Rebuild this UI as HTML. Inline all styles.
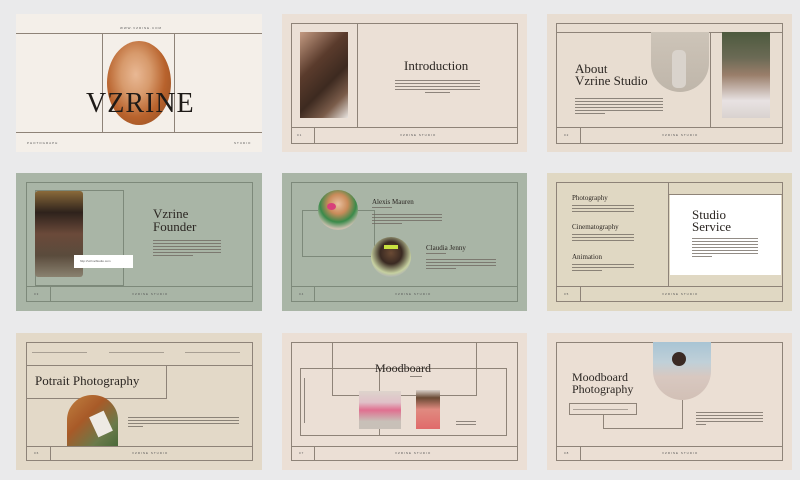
<!DOCTYPE html>
<html><head><meta charset="utf-8"><style>
*{margin:0;padding:0;box-sizing:border-box}
body{width:800px;height:480px;background:#eaeaeb;position:relative;overflow:hidden;font-family:"Liberation Serif",serif;color:#2b2622}
div{position:absolute}
.s{}
.b{border:1px solid #8e8378}
.h{height:1px;background:#8e8378}
.v{width:1px;background:#8e8378}
.t{white-space:nowrap;color:#2b2622}
.sm{font-family:"Liberation Sans",sans-serif;font-size:3px;letter-spacing:1px;color:#555}
.tx{height:1px;background:#6d655e;opacity:.75}
</style></head><body>

<!-- Slide 1 -->
<div style="left:16px;top:14px;width:246px;height:138px;background:#f4efe9"></div>
<div class="h" style="left:16px;top:33px;width:246px"></div>
<div class="h" style="left:16px;top:132px;width:246px"></div>
<div class="v" style="left:102px;top:33px;height:99px"></div>
<div class="v" style="left:174px;top:33px;height:99px"></div>
<div style="left:107px;top:41px;width:64px;height:84px;border-radius:50%;background:radial-gradient(ellipse at 45% 40%,#e9b894 0%,#d79a6c 30%,#b8622c 60%,#8a4a22 100%)"></div>
<div class="t" style="left:86px;top:88px;font-size:28px;letter-spacing:1px;color:#1e1a17">VZRINE</div>
<div class="sm t" style="left:120px;top:26px">WWW.VZRINE.COM</div>
<div class="sm t" style="left:27px;top:141px">PHOTOGRAPH</div>
<div class="sm t" style="left:234px;top:141px">STUDIO</div>

<!-- Slide 2 -->
<div style="left:282px;top:14px;width:245px;height:138px;background:#ebe0d6"></div>
<div class="b" style="left:291px;top:23px;width:227px;height:121px"></div>
<div class="h" style="left:291px;top:127px;width:227px"></div>
<div class="v" style="left:314px;top:127px;height:17px"></div>
<div class="v" style="left:357px;top:23px;height:104px"></div>
<div style="left:300px;top:32px;width:48px;height:86px;background:linear-gradient(135deg,#c39a82 0%,#5a3b2c 35%,#3d2a20 60%,#7a5c4a 80%,#e8e4e0 100%)"></div>
<div class="sm t" style="left:297px;top:133px">01</div>
<div class="t" style="left:404px;top:58px;font-size:13px">Introduction</div>
<div class="tx" style="left:395px;top:80px;width:85px"></div>
<div class="tx" style="left:395px;top:83px;width:85px"></div>
<div class="tx" style="left:395px;top:86px;width:85px"></div>
<div class="tx" style="left:395px;top:89px;width:85px"></div>
<div class="tx" style="left:425px;top:92px;width:25px"></div>
<div class="sm t" style="left:400px;top:133px">VZRINE STUDIO</div>

<!-- Slide 3 -->
<div style="left:547px;top:14px;width:245px;height:138px;background:#e8ddd1"></div>
<div class="b" style="left:556px;top:23px;width:227px;height:121px"></div>
<div class="h" style="left:556px;top:32px;width:227px"></div>
<div class="h" style="left:556px;top:127px;width:227px"></div>
<div class="v" style="left:580px;top:127px;height:17px"></div>
<div class="v" style="left:710px;top:32px;height:95px"></div>
<div style="left:651px;top:32px;width:58px;height:60px;border-radius:0 0 29px 29px;background:linear-gradient(180deg,#cdc4b8,#bfb6aa)"></div>
<div style="left:672px;top:50px;width:14px;height:38px;background:#d9d3cc;border-radius:5px"></div>
<div style="left:722px;top:32px;width:48px;height:86px;background:linear-gradient(180deg,#4d5a3e 0%,#6b6a55 30%,#9a7e6a 50%,#e8e2e2 80%,#d9d2cf 100%)"></div>
<div class="sm t" style="left:564px;top:133px">02</div>
<div class="sm t" style="left:662px;top:133px">VZRINE STUDIO</div>
<div class="t" style="left:575px;top:63px;font-size:13px;line-height:12px">About<br>Vzrine Studio</div>
<div class="tx" style="left:575px;top:98px;width:88px"></div>
<div class="tx" style="left:575px;top:101px;width:88px"></div>
<div class="tx" style="left:575px;top:104px;width:88px"></div>
<div class="tx" style="left:575px;top:107px;width:88px"></div>
<div class="tx" style="left:575px;top:110px;width:88px"></div>
<div class="tx" style="left:575px;top:113px;width:30px"></div>

<!-- Slide 4 -->
<div style="left:16px;top:173px;width:246px;height:138px;background:#a9b5a6"></div>
<div class="b" style="left:26px;top:182px;width:227px;height:120px;border-color:#7d897a"></div>
<div class="h" style="left:26px;top:286px;width:227px;background:#7d897a"></div>
<div class="v" style="left:50px;top:286px;height:16px;background:#7d897a"></div>
<div class="b" style="left:35px;top:190px;width:89px;height:96px;border-color:#7d897a"></div>
<div style="left:35px;top:191px;width:48px;height:86px;border-radius:3px;background:linear-gradient(180deg,#8a6a3a 0%,#2e221c 25%,#6b4a3a 50%,#5a4b3c 75%,#8a8270 100%)"></div>
<div style="left:74px;top:255px;width:59px;height:13px;background:#fff"></div>
<div class="sm t" style="left:80px;top:259px;letter-spacing:0">http://vzrineStudio.com</div>
<div class="t" style="left:153px;top:207px;font-size:13px;line-height:13px">Vzrine<br>Founder</div>
<div class="tx" style="left:153px;top:240px;width:68px"></div>
<div class="tx" style="left:153px;top:243px;width:68px"></div>
<div class="tx" style="left:153px;top:246px;width:68px"></div>
<div class="tx" style="left:153px;top:249px;width:68px"></div>
<div class="tx" style="left:153px;top:252px;width:68px"></div>
<div class="tx" style="left:153px;top:255px;width:40px"></div>
<div class="sm t" style="left:34px;top:292px">03</div>
<div class="sm t" style="left:132px;top:292px">VZRINE STUDIO</div>

<!-- Slide 5 -->
<div style="left:282px;top:173px;width:245px;height:138px;background:#a9b5a6"></div>
<div class="b" style="left:291px;top:182px;width:227px;height:120px;border-color:#7d897a"></div>
<div class="h" style="left:291px;top:286px;width:227px;background:#7d897a"></div>
<div class="v" style="left:314px;top:286px;height:16px;background:#7d897a"></div>
<div class="b" style="left:302px;top:210px;width:73px;height:47px;border-color:#7d897a"></div>
<div style="left:318px;top:190px;width:40px;height:40px;border-radius:50%;background:radial-gradient(circle at 50% 35%,#e8c0a0 0%,#c98b5a 30%,#3a8a4a 55%,#c9bfae 75%)"></div>
<div style="left:327px;top:203px;width:9px;height:7px;border-radius:50%;background:#d8407a"></div>
<div style="left:371px;top:237px;width:40px;height:40px;border-radius:50%;background:radial-gradient(circle at 50% 40%,#6a4a34 0%,#3a2a22 35%,#c6d0a0 65%,#a9acb5 80%)"></div>
<div style="left:384px;top:245px;width:14px;height:4px;background:#c8e040"></div>
<div class="t" style="left:372px;top:198px;font-size:7px">Alexis Mauren</div>
<div class="tx" style="left:372px;top:207px;width:20px"></div>
<div class="tx" style="left:372px;top:214px;width:70px"></div>
<div class="tx" style="left:372px;top:217px;width:70px"></div>
<div class="tx" style="left:372px;top:220px;width:70px"></div>
<div class="tx" style="left:372px;top:223px;width:30px"></div>
<div class="t" style="left:426px;top:244px;font-size:7px">Claudia Jenny</div>
<div class="tx" style="left:426px;top:253px;width:20px"></div>
<div class="tx" style="left:426px;top:259px;width:70px"></div>
<div class="tx" style="left:426px;top:262px;width:70px"></div>
<div class="tx" style="left:426px;top:265px;width:70px"></div>
<div class="tx" style="left:426px;top:268px;width:30px"></div>
<div class="sm t" style="left:299px;top:292px">04</div>
<div class="sm t" style="left:395px;top:292px">VZRINE STUDIO</div>

<!-- Slide 6 -->
<div style="left:547px;top:173px;width:245px;height:138px;background:#e0d8c3"></div>
<div class="b" style="left:556px;top:182px;width:227px;height:120px"></div>
<div class="h" style="left:556px;top:286px;width:227px"></div>
<div class="v" style="left:580px;top:286px;height:16px"></div>
<div class="v" style="left:668px;top:182px;height:104px"></div>
<div class="h" style="left:668px;top:194px;width:114px"></div>
<div style="left:670px;top:195px;width:111px;height:80px;background:#fff"></div>
<div class="t" style="left:692px;top:209px;font-size:13px;line-height:12px">Studio<br>Service</div>
<div class="tx" style="left:692px;top:238px;width:66px"></div>
<div class="tx" style="left:692px;top:241px;width:66px"></div>
<div class="tx" style="left:692px;top:244px;width:66px"></div>
<div class="tx" style="left:692px;top:247px;width:66px"></div>
<div class="tx" style="left:692px;top:250px;width:66px"></div>
<div class="tx" style="left:692px;top:253px;width:66px"></div>
<div class="tx" style="left:692px;top:256px;width:20px"></div>
<div class="t" style="left:572px;top:194px;font-size:7px">Photography</div>
<div class="tx" style="left:572px;top:205px;width:62px"></div>
<div class="tx" style="left:572px;top:208px;width:62px"></div>
<div class="tx" style="left:572px;top:211px;width:62px"></div>
<div class="t" style="left:572px;top:223px;font-size:7px">Cinematography</div>
<div class="tx" style="left:572px;top:234px;width:62px"></div>
<div class="tx" style="left:572px;top:237px;width:62px"></div>
<div class="tx" style="left:572px;top:240px;width:62px"></div>
<div class="t" style="left:572px;top:253px;font-size:7px">Animation</div>
<div class="tx" style="left:572px;top:264px;width:62px"></div>
<div class="tx" style="left:572px;top:267px;width:62px"></div>
<div class="tx" style="left:572px;top:270px;width:30px"></div>
<div class="sm t" style="left:564px;top:292px">05</div>
<div class="sm t" style="left:662px;top:292px">VZRINE STUDIO</div>

<!-- Slide 7 -->
<div style="left:16px;top:333px;width:246px;height:137px;background:#e3d9c8"></div>
<div class="b" style="left:26px;top:342px;width:227px;height:119px"></div>
<div class="h" style="left:26px;top:365px;width:227px"></div>
<div class="h" style="left:26px;top:446px;width:227px"></div>
<div class="v" style="left:50px;top:446px;height:15px"></div>
<div class="b" style="left:26px;top:365px;width:141px;height:34px"></div>
<div class="t" style="left:35px;top:373px;font-size:13px">Potrait Photography</div>
<div style="left:67px;top:395px;width:51px;height:51px;border-radius:25px 25px 0 0;background:linear-gradient(135deg,#c08040 0%,#a85a28 40%,#6a7a4a 75%,#4a6a3a 100%)"></div>
<div style="left:93px;top:413px;width:16px;height:22px;background:#eeeae4;transform:rotate(-25deg)"></div>
<div class="tx" style="left:32px;top:352px;width:55px;opacity:.5"></div>
<div class="tx" style="left:109px;top:352px;width:55px;opacity:.5"></div>
<div class="tx" style="left:185px;top:352px;width:55px;opacity:.5"></div>
<div class="tx" style="left:128px;top:417px;width:111px"></div>
<div class="tx" style="left:128px;top:420px;width:111px"></div>
<div class="tx" style="left:128px;top:423px;width:111px"></div>
<div class="tx" style="left:128px;top:426px;width:15px"></div>
<div class="sm t" style="left:34px;top:451px">06</div>
<div class="sm t" style="left:132px;top:451px">VZRINE STUDIO</div>

<!-- Slide 8 -->
<div style="left:282px;top:333px;width:245px;height:137px;background:#ebdfd5"></div>
<div class="b" style="left:291px;top:342px;width:227px;height:119px"></div>
<div class="h" style="left:291px;top:446px;width:227px"></div>
<div class="v" style="left:314px;top:446px;height:15px"></div>
<div class="b" style="left:332px;top:342px;width:145px;height:54px"></div>
<div class="b" style="left:300px;top:368px;width:80px;height:68px"></div>
<div class="b" style="left:310px;top:368px;width:197px;height:68px;border-left:none"></div>
<div class="t" style="left:375px;top:361px;font-size:12px">Moodboard</div>
<div class="tx" style="left:410px;top:376px;width:12px"></div>
<div style="left:359px;top:391px;width:42px;height:38px;background:linear-gradient(180deg,#ddd4cc,#e0c0c8 30%,#e07090 50%,#c8c0b8 80%)"></div>
<div style="left:416px;top:390px;width:24px;height:39px;background:linear-gradient(180deg,#d8d0c8 0%,#6a4a34 20%,#e08a80 50%,#e06a6a 100%)"></div>
<div class="tx" style="left:304px;top:378px;width:1px;height:45px;"></div>
<div class="tx" style="left:456px;top:421px;width:20px"></div>
<div class="tx" style="left:456px;top:424px;width:20px"></div>
<div class="sm t" style="left:299px;top:451px">07</div>
<div class="sm t" style="left:395px;top:451px">VZRINE STUDIO</div>

<!-- Slide 9 -->
<div style="left:547px;top:333px;width:245px;height:137px;background:#ebdfd4"></div>
<div class="b" style="left:556px;top:342px;width:227px;height:119px"></div>
<div class="h" style="left:556px;top:446px;width:227px"></div>
<div class="v" style="left:580px;top:446px;height:15px"></div>
<div style="left:653px;top:342px;width:58px;height:58px;border-radius:0 0 29px 29px;background:linear-gradient(180deg,#a8c4d4 0%,#c0d0d8 35%,#d8c8c0 60%,#d2c0b6 100%)"></div>
<div style="left:672px;top:352px;width:14px;height:14px;border-radius:50%;background:#3a2a24"></div>
<div class="v" style="left:750px;top:342px;height:0"></div>
<div class="v" style="left:682px;top:400px;height:28px"></div>
<div class="h" style="left:603px;top:428px;width:80px"></div>
<div class="v" style="left:603px;top:415px;height:13px"></div>
<div class="b" style="left:569px;top:403px;width:68px;height:12px"></div>
<div class="tx" style="left:573px;top:409px;width:55px;opacity:.5"></div>
<div class="t" style="left:572px;top:371px;font-size:12px;line-height:12px">Moodboard<br>Photography</div>
<div class="tx" style="left:696px;top:412px;width:67px"></div>
<div class="tx" style="left:696px;top:415px;width:67px"></div>
<div class="tx" style="left:696px;top:418px;width:67px"></div>
<div class="tx" style="left:696px;top:421px;width:67px"></div>
<div class="tx" style="left:696px;top:424px;width:10px"></div>
<div class="sm t" style="left:564px;top:451px">08</div>
<div class="sm t" style="left:662px;top:451px">VZRINE STUDIO</div>

</body></html>
